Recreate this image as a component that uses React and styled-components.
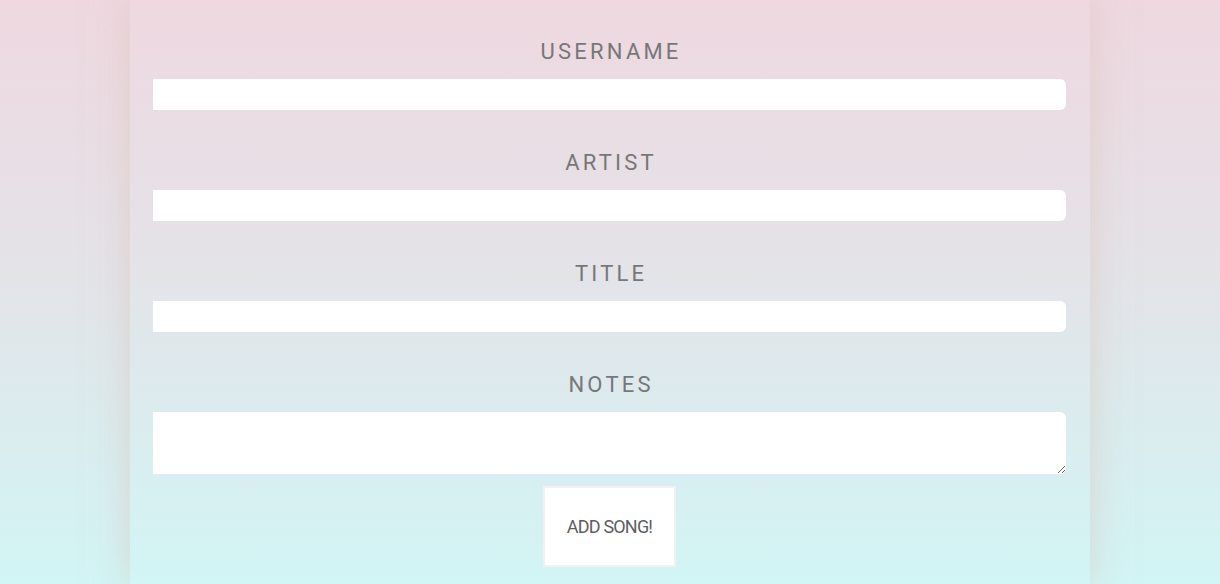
import React from "react";
import styled, { createGlobalStyle } from "styled-components";

const GlobalStyle = createGlobalStyle`
  html, body {
    margin: 0;
    padding: 0;
  }
  body {
    min-height: 584px;
    background: linear-gradient(to bottom, #efd8e0 0%, #e4e3e8 45%, #d2f5f5 100%);
    font-family: Roboto, "DejaVu Sans", sans-serif;
  }
`;

const Page = styled.div`
  height: 584px;
  overflow: hidden;
  display: flex;
  justify-content: center;
`;

const Container = styled.div`
  width: 960px;
  box-sizing: border-box;
  padding: 37px 24px 0 23px;
  box-shadow: 0 0 36px rgba(215, 190, 180, 0.55);
`;

const Form = styled.form`
  display: flex;
  flex-direction: column;
  align-items: center;
`;

const Field = styled.div`
  width: 100%;
  display: flex;
  flex-direction: column;
  align-items: center;
  margin-bottom: 38px;

  &:last-of-type {
    margin-bottom: 12px;
  }
`;

const Label = styled.label`
  font-family: Roboto, "DejaVu Sans", sans-serif;
  font-size: 22px;
  font-weight: 400;
  line-height: 30px;
  letter-spacing: 3.2px;
  padding-left: 3.2px;
  color: #777;
  text-transform: uppercase;
  margin-bottom: 12px;
`;

const Input = styled.input`
  width: 100%;
  height: 31px;
  box-sizing: border-box;
  border: none;
  outline: none;
  background: #fff;
  border-radius: 0 6px 6px 0;
  padding: 0 8px;
`;

const TextArea = styled.textarea`
  width: 100%;
  height: 62px;
  box-sizing: border-box;
  border: none;
  outline: none;
  background: #fff;
  border-radius: 0 6px 6px 0;
  padding: 6px 8px;
  resize: vertical;
  display: block;
`;

const Button = styled.button`
  width: 133px;
  height: 81px;
  background: #fff;
  border: 2px solid #f0f2f2;
  color: #5e5e5e;
  font-family: Roboto, "DejaVu Sans", sans-serif;
  font-size: 18px;
  font-weight: 400;
  letter-spacing: -0.8px;
  cursor: pointer;
`;

const fields = [
  { name: "username", label: "Username" },
  { name: "artist", label: "Artist" },
  { name: "title", label: "Title" },
];

export default function App() {
  return (
    <>
      <GlobalStyle />
      <Page>
        <Container>
          <Form onSubmit={(e) => e.preventDefault()}>
            {fields.map((f) => (
              <Field key={f.name}>
                <Label htmlFor={f.name}>{f.label}</Label>
                <Input id={f.name} name={f.name} />
              </Field>
            ))}
            <Field>
              <Label htmlFor="notes">Notes</Label>
              <TextArea id="notes" name="notes" />
            </Field>
            <Button type="submit">ADD SONG!</Button>
          </Form>
        </Container>
      </Page>
    </>
  );
}
